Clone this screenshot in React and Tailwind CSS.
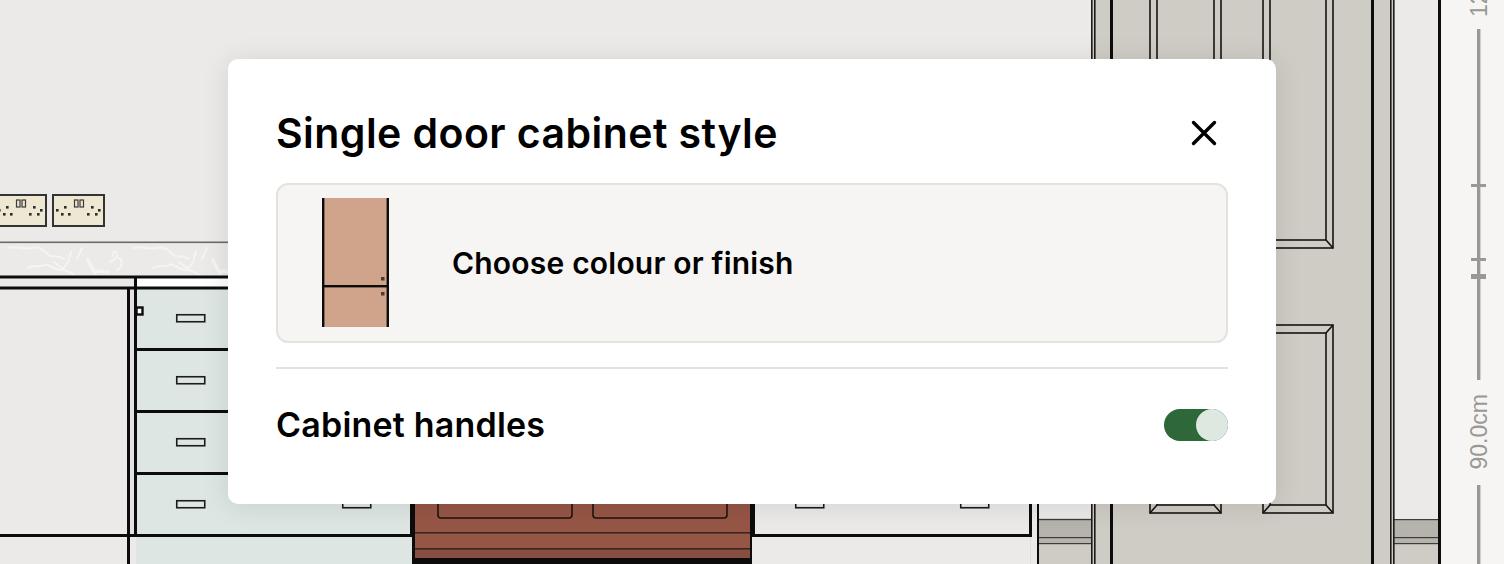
import React from "react";

const Socket = ({ x }) => (
  <g transform={`translate(${x} 194)`}>
    <rect x="1" y="1" width="51" height="31" fill="#eee8d3" stroke="#333331" strokeWidth="2" />
    <rect x="22.5" y="6" width="3.5" height="7" fill="none" stroke="#3a3a38" strokeWidth="1.2" />
    <rect x="28" y="6" width="3.5" height="7" fill="none" stroke="#3a3a38" strokeWidth="1.2" />
    {[[5, 16], [13, 13], [10, 20], [17, 20], [40, 13], [47, 16], [36, 20], [44, 20]].map(([a, b], i) => (
      <rect key={i} x={a - 1} y={b - 1} width="2.6" height="2.6" fill="#2c2c2a" />
    ))}
  </g>
);

const Squiggle = ({ x }) => (
  <g transform={`translate(${x} 244)`} fill="none" stroke="#f5f4f2" strokeWidth="2" strokeLinecap="round">
    <path d="M18 4c8-3 14 2 24 0s12 4 18 8c6 1 10 0 14 3" />
    <path d="M38 24c6-4 12 0 16-3s10 6 18 5c4 0 8 2 12 5" />
    <path d="M72 26l6-8 3-10M92 4l-5 11M64 18l8 6" />
    <path d="M98 16l7 14M104 28c3-3 8 1 14 0" strokeWidth="3.4" />
    <path d="M120 18c4-2 8-4 7-8s-6-3-4 2M4 14c4 3 4 8-2 12" />
  </g>
);

const Handle = ({ x, y, w = 28 }) => (
  <rect x={x + 0.75} y={y + 0.75} width={w} height="7" fill="none" stroke="#1c1c1c" strokeWidth="1.6" />
);

const Panel = ({ x, y, w, h }) => (
  <g fill="none" stroke="#141412" strokeWidth="1.6">
    <rect x={x} y={y} width={w} height={h} />
    <rect x={x + 7} y={y + 8} width={w - 14} height={h - 16} />
    <path d={`M${x} ${y}l7 8M${x + w} ${y}l-7 8M${x} ${y + h}l7 -8M${x + w} ${y + h}l-7 -8`} />
  </g>
);

const Backdrop = () => (
  <svg className="absolute inset-0" width="1504" height="564" viewBox="0 0 1504 564">
    <rect width="1504" height="564" fill="#ebeae8" />
    <Socket x={-6} />
    <Socket x={52} />

    <rect y="241.5" width="1030" height="1.6" fill="#6a6a68" />
    {[-10, 115].map((x) => <Squiggle key={x} x={x} />)}

    <rect x="136" y="278" width="280" height="9" fill="#ffffff" />
    <rect x="136" y="288" width="276" height="276" fill="#dde6e2" />
    <rect x="129" y="288" width="7" height="248" fill="#e3e2df" />

    <rect y="275.5" width="420" height="3" fill="#0c0c0c" />
    <rect y="286.5" width="420" height="3" fill="#0c0c0c" />
    <rect x="127" y="288" width="3" height="276" fill="#0c0c0c" />
    <rect x="134" y="277" width="3" height="259" fill="#0c0c0c" />
    {[348, 410, 472].map((y) => <rect key={y} x="136" y={y} width="276" height="3" fill="#0c0c0c" />)}
    <rect y="534" width="412" height="3" fill="#0c0c0c" />
    <rect x="136.5" y="307.5" width="6" height="7" fill="#fff" stroke="#0c0c0c" strokeWidth="2.4" />
    {[314, 376, 438, 500].map((y) => <Handle key={y} x={176} y={y} />)}
    <Handle x={342} y={500} />

    <rect x="410" y="490" width="346" height="46" fill="#0c0c0c" />
    <rect x="412" y="536" width="340" height="28" fill="#0c0c0c" />
    <rect x="415" y="490" width="335" height="68" fill="#965646" />
    <rect x="415" y="549" width="335" height="9" fill="#874f41" />
    <rect x="415" y="532" width="335" height="1.6" fill="#3a2620" />
    <rect x="415" y="548" width="335" height="1.6" fill="#3a2620" />
    <rect x="438" y="490" width="134" height="28" rx="3" fill="none" stroke="#1e1311" strokeWidth="1.6" />
    <rect x="593" y="490" width="134" height="28" rx="3" fill="none" stroke="#1e1311" strokeWidth="1.6" />

    <rect x="755" y="490" width="275" height="44" fill="#ebeae8" />
    <rect x="752" y="534" width="280" height="3" fill="#0c0c0c" />
    <rect x="1029" y="490" width="3" height="46" fill="#0c0c0c" />
    <rect x="1030" y="537" width="1" height="27" fill="#e0dfdc" />
    <Handle x={795} y={500} />
    <Handle x={960} y={500} />

    <rect x="1038" y="518" width="53" height="46" fill="#cfccc5" />
    <rect x="1038" y="519" width="53" height="25" fill="#b5b3ac" />
    <rect x="1394" y="519" width="45" height="25" fill="#b5b3ac" />
    <rect x="1394" y="544" width="45" height="20" fill="#cfccc5" />
    {[519, 537, 543].map((y) => (
      <g key={y} fill="#3c3c39">
        <rect x="1038" y={y} width="53" height="1.2" />
        <rect x="1394" y={y} width="45" height="1.2" />
      </g>
    ))}
    <rect x="1037" y="490" width="2" height="74" fill="#0c0c0c" />

    <rect x="1091" width="303" height="564" fill="#cfccc5" />
    {[[1091, 1.6], [1094, 1.6], [1390, 1.6], [1393, 1.6]].map(([x, w]) => <rect key={x} x={x} width={w} height="564" fill="#1c1c1c" />)}
    <rect x="1110" width="3" height="564" fill="#0c0c0c" />
    <rect x="1371" width="3" height="564" fill="#0c0c0c" />
    <rect x="1438" width="3" height="564" fill="#0c0c0c" />

    <Panel x={1150} y={-300} w={71} h={548} />
    <Panel x={1263} y={-300} w={70} h={548} />
    <Panel x={1150} y={325} w={71} h={188} />
    <Panel x={1263} y={325} w={70} h={188} />

    <rect x="1441" width="63" height="564" fill="#f6f5f3" />
    <g fill="#999894">
      <rect x="1477" y="29" width="3.4" height="351" />
      <rect x="1477" y="485" width="3.4" height="79" />
      <rect x="1471" y="184" width="15" height="3" />
      <rect x="1471" y="258" width="15" height="3" />
      <rect x="1471" y="274" width="15" height="5" />
      <text transform="translate(1487 469.5) rotate(-90)" fontFamily="'Liberation Sans', Arial, sans-serif" fontSize="23">90.0cm</text>
      <text transform="translate(1487 17) rotate(-90)" fontFamily="'Liberation Sans', Arial, sans-serif" fontSize="23">120.0cm</text>
    </g>
  </svg>
);

const Door = () => (
  <svg width="67" height="129" viewBox="0 0 67 129" className="mb-0.5 shrink-0">
    <rect width="67" height="129" fill="#d0a38b" />
    <rect width="2.4" height="129" fill="#0c0c0c" />
    <rect x="64.6" width="2.4" height="129" fill="#0c0c0c" />
    <rect y="87" width="67" height="2.4" fill="#0c0c0c" />
    <rect x="59" y="79" width="3.5" height="3.5" fill="#4d3a30" />
    <rect x="59" y="94" width="3.5" height="3.5" fill="#4d3a30" />
  </svg>
);

export default function App() {
  return (
    <div className="relative h-[564px] w-[1504px] overflow-hidden font-['Inter','Noto_Sans',sans-serif] text-black">
      <Backdrop />
      <div className="absolute left-[228px] top-[59px] flex h-[445px] w-[1048px] flex-col rounded-[10px] bg-white px-12 pt-12 shadow-[0_2px_28px_rgba(0,0,0,0.1)]">
        <div className="mb-6 flex h-[52px] items-center justify-between">
          <h1 className="text-[41px] font-semibold leading-[52px] tracking-[0.44px]">Single door cabinet style</h1>
          <button className="mr-3 flex h-6 w-6 items-center justify-center">
            <svg width="26" height="26" viewBox="0 0 26 26" fill="none" stroke="#000" strokeWidth="3.4" strokeLinecap="round" className="shrink-0">
              <path d="M2.5 2.5l21 21M23.5 2.5l-21 21" />
            </svg>
          </button>
        </div>
        <div className="flex h-40 items-center rounded-xl border-2 border-[#e4e2dc] bg-[#f6f5f3] pl-[44px]">
          <Door />
          <span className="ml-[63px] text-[30px] font-semibold tracking-[0.2px]">Choose colour or finish</span>
        </div>
        <div className="mt-6 flex items-center justify-between border-t-2 border-[#e4e2dc] pt-10">
          <span className="text-[34px] font-semibold leading-8 tracking-[0.2px]">Cabinet handles</span>
          <div className="flex h-8 w-16 justify-end rounded-full bg-[#2e6738]">
            <div className="h-8 w-8 rounded-full bg-[#dde8e0]" />
          </div>
        </div>
      </div>
    </div>
  );
}
